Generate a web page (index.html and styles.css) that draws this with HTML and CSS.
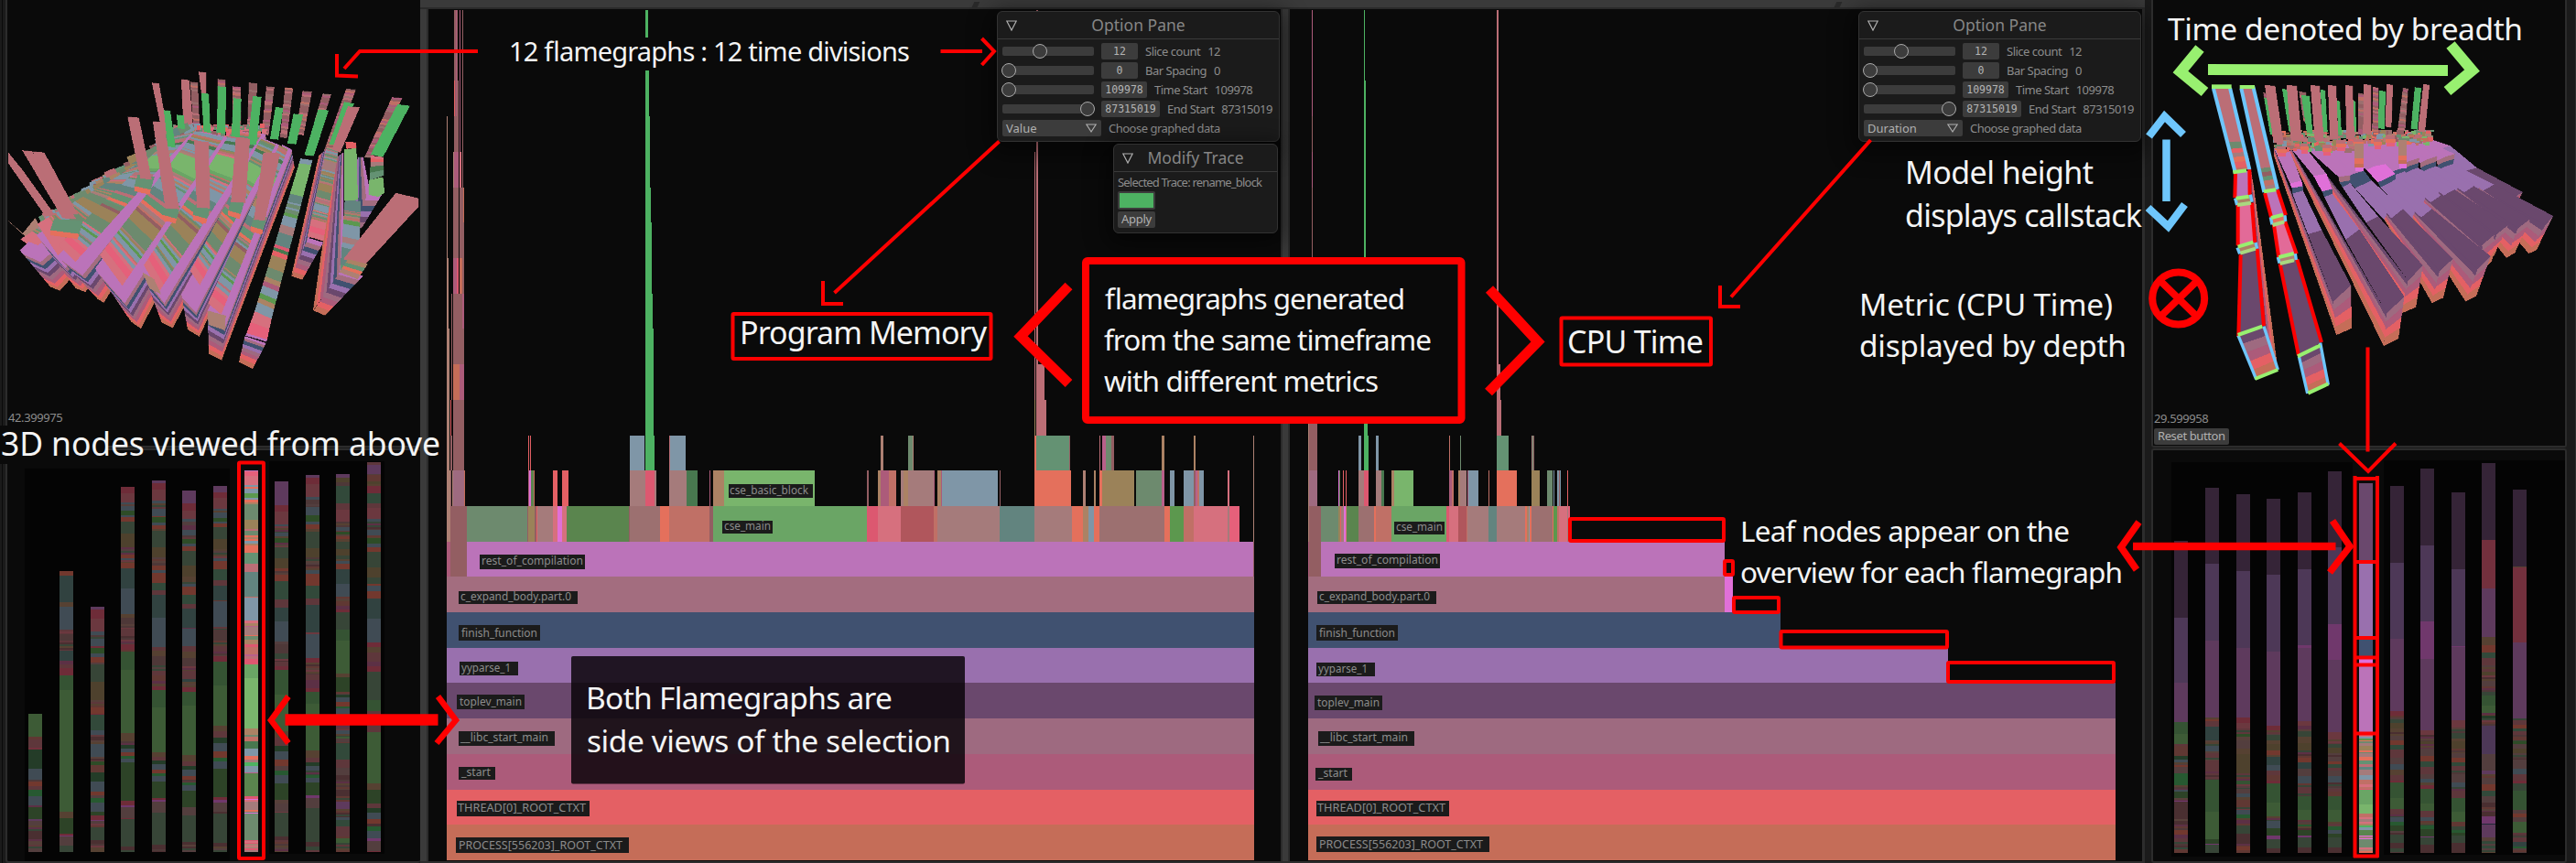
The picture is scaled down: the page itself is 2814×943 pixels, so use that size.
FILE: index.html
```html
<!DOCTYPE html>
<html lang="en">
<head>
<meta charset="utf-8">
<title>Flamegraph slices</title>
<link rel="stylesheet" href="styles.css">
</head>
<body>
<div class="screen">
  <aside class="side side-left">
    <section class="view view-top">
      <svg class="canvas" viewBox="8 0 451 487"><g id="model-left"></g></svg>
      <div class="readout"><span>42.399975</span></div>
    </section>
    <section class="view view-bottom">
      <svg class="canvas" viewBox="8 492 451 449">
        <rect class="shade" x="27" y="512" width="224" height="429"/>
        <rect class="shade" x="294" y="504" width="126" height="429"/>
        <g id="bars-left"></g>
      </svg>
    </section>
  </aside>

  <main class="center">
    <div class="topbar"><i class="slit slit-a"></i><i class="slit slit-b"></i></div>
    <div class="graphs">
      <div class="divider divider-first"></div>
      <section class="graph">
        <svg class="canvas" viewBox="468 10 931 931"><g id="flame-left"></g><g id="tags-left"></g></svg>
        <div class="window options">
          <header><svg class="tri" viewBox="0 0 12 12"><path d="M.8 1h10.4L6 11z"/></svg><h2>Option Pane</h2></header>
          <div class="rows">
            <div class="row"><span class="slider"><b class="knob k41"></b></span><span class="num">12</span><span class="lab">Slice count</span><span class="lab">12</span></div>
            <div class="row"><span class="slider"><b class="knob k0"></b></span><span class="num">0</span><span class="lab">Bar Spacing</span><span class="lab">0</span></div>
            <div class="row"><span class="slider"><b class="knob k0"></b></span><span class="num w50">109978</span><span class="lab">Time Start</span><span class="lab">109978</span></div>
            <div class="row"><span class="slider"><b class="knob k100"></b></span><span class="num w64">87315019</span><span class="lab">End Start</span><span class="lab">87315019</span></div>
            <div class="row"><span class="select">Value<svg class="tri" viewBox="0 0 12 12"><path d="M.8 2h10.4L6 10z"/></svg></span><span class="lab">Choose graphed data</span></div>
          </div>
        </div>
        <div class="window trace">
          <header><svg class="tri" viewBox="0 0 12 12"><path d="M.8 1h10.4L6 11z"/></svg><h2>Modify Trace</h2></header>
          <div class="trace-body">
            <span class="lab">Selected Trace: rename_block</span>
            <span class="swatch"></span>
            <span class="button">Apply</span>
          </div>
        </div>
      </section>
      <div class="divider"></div>
      <section class="graph">
        <svg class="canvas" viewBox="1409 10 931 931"><g id="flame-right"></g><g id="tags-right"></g></svg>
        <div class="window options">
          <header><svg class="tri" viewBox="0 0 12 12"><path d="M.8 1h10.4L6 11z"/></svg><h2>Option Pane</h2></header>
          <div class="rows">
            <div class="row"><span class="slider"><b class="knob k41"></b></span><span class="num">12</span><span class="lab">Slice count</span><span class="lab">12</span></div>
            <div class="row"><span class="slider"><b class="knob k0"></b></span><span class="num">0</span><span class="lab">Bar Spacing</span><span class="lab">0</span></div>
            <div class="row"><span class="slider"><b class="knob k0"></b></span><span class="num w50">109978</span><span class="lab">Time Start</span><span class="lab">109978</span></div>
            <div class="row"><span class="slider"><b class="knob k100"></b></span><span class="num w64">87315019</span><span class="lab">End Start</span><span class="lab">87315019</span></div>
            <div class="row"><span class="select">Duration<svg class="tri" viewBox="0 0 12 12"><path d="M.8 2h10.4L6 10z"/></svg></span><span class="lab">Choose graphed data</span></div>
          </div>
        </div>
      </section>
    </div>
  </main>

  <aside class="side side-right">
    <section class="view view-top">
      <svg class="canvas" viewBox="2352 0 450 487"><g id="model-right"></g></svg>
      <div class="readout"><span>29.599958</span><span class="button">Reset button</span></div>
    </section>
    <section class="view view-bottom">
      <svg class="canvas" viewBox="2352 492 450 449">
        <rect class="shade" x="2372" y="505" width="198" height="431"/>
        <rect class="shade" x="2604" y="503" width="198" height="431"/>
        <g id="bars-right"></g>
      </svg>
    </section>
  </aside>

  <svg class="notes" viewBox="0 0 2814 943">
    <g class="plate">
      <rect x="0" y="465" width="115" height="42"/>
      <rect x="540" y="41" width="470" height="36"/>
    </g>
    <g class="red w4">
      <path d="M522 56H393L376 75M368 59V82.500L391 83.500"/>
      <path d="M1027.500 56H1073M1072.500 42L1086 56L1072.500 71"/>
      <path d="M1091.500 154.500L911.500 320M899 307V332H921"/>
      <path d="M2043.500 153L1891 324.500M1879 312V335H1901"/>
      <path d="M2586.500 379.500V493.500M2555.500 484.500L2587 515L2617 484.500"/>
      <rect x="800.500" y="343" width="282" height="49" rx="1"/>
      <rect x="1705.500" y="347.500" width="163.500" height="51" rx="1"/>
      <rect x="261" y="505.500" width="27" height="432.500" rx="1"/>
      <rect x="1715" y="567" width="168" height="24" rx="1"/>
      <rect x="1884" y="613" width="9" height="15" rx="1"/>
      <rect x="1894" y="653" width="49" height="16" rx="1"/>
      <rect x="1945.500" y="690" width="181.500" height="17.500" rx="1"/>
      <rect x="2128" y="724" width="181" height="21" rx="1"/>
      <path d="M2572.500 520V937M2597 520V937M2571 523H2598M2571 614H2598M2571 697H2598M2571 718.500H2598M2571 726.500H2598M2571 801.500H2598M2571 935.500H2598"/>
    </g>
    <rect class="callout" x="1186" y="285" width="410.500" height="174" rx="2"/>
    <rect class="veil" x="624" y="717" width="430" height="139.500" rx="2"/>
    <g class="red">
      <path stroke-width="11" d="M1167.500 312.500L1115 367.500L1167.500 419"/>
      <path stroke-width="11" d="M1627 316L1680 373.500L1626 428.500"/>
      <path stroke-width="12.500" d="M311.500 786.500H478.500"/>
      <path stroke-width="6.500" d="M315 761L296 787L315 812M478.500 761L498 787L477 812"/>
      <path stroke-width="8.500" d="M2330 597H2551.500"/>
      <path stroke-width="7.500" d="M2336.500 570.500L2317 598L2334 622.500M2548 569L2567 597L2545 625.500"/>
      <circle cx="2379.700" cy="326" r="28.500" stroke-width="8"/>
      <path stroke-width="8" d="M2360 307L2400 346M2400 307L2360 346"/>
    </g>
    <path class="lime" d="M2412 76L2674 77M2403 53L2382 78.500L2408.500 100.500M2677 49L2700.500 77L2673.500 99.500"/>
    <path class="sky" d="M2366.500 152.500V220M2347.500 149L2364.500 127L2385 147M2346.500 227L2368.500 247.500L2386.500 223.500"/>
    <g class="say">
      <text x="1" y="497.500" font-size="35.500" textLength="480">3D nodes viewed from above</text>
      <text x="556" y="66.500" font-size="29" textLength="438">12 flamegraphs : 12 time divisions</text>
      <text x="808" y="376" font-size="34" textLength="270">Program Memory</text>
      <text x="1206" y="337.500" font-size="31.500" textLength="328">flamegraphs generated</text>
      <text x="1206" y="382.500" font-size="31.500" textLength="358">from the same timeframe</text>
      <text x="1206" y="427.500" font-size="31.500" textLength="300">with different metrics</text>
      <text x="1712" y="385.500" font-size="34" textLength="149">CPU Time</text>
      <text x="640" y="775" font-size="33.500" textLength="335">Both Flamegraphs are</text>
      <text x="641" y="822" font-size="33.500" textLength="398">side views of the selection</text>
      <text x="2081" y="201" font-size="34" textLength="206">Model height</text>
      <text x="2081" y="248" font-size="34" textLength="259">displays callstack</text>
      <text x="2031" y="345" font-size="33.500" textLength="277">Metric (CPU Time)</text>
      <text x="2031" y="390" font-size="33.500" textLength="292">displayed by depth</text>
      <text x="1901" y="591.500" font-size="31.500" textLength="360">Leaf nodes appear on the</text>
      <text x="1901" y="636.500" font-size="31.500" textLength="418">overview for each flamegraph</text>
      <text x="2368" y="44" font-size="33.500" textLength="388">Time denoted by breadth</text>
    </g>
  </svg>
</div>
<script src="script.js"></script>
</body>
</html>
```
FILE: styles.css
```css
* { box-sizing: border-box; }
body { margin: 0; background: #0a0a0a; overflow: hidden; }
.screen {
  position: relative;
  display: flex;
  width: 2814px;
  height: 943px;
  background: #1b1b1b;
  font: 13px "Noto Sans", "Open Sans", sans-serif;
  color: #8c8c8c;
}
.canvas { display: block; width: 100%; height: 100%; shape-rendering: crispEdges; }

.side { display: flex; flex-direction: column; gap: 1px; flex: none; }
.side-left { width: 459px; padding-left: 6px; background: linear-gradient(90deg, #1b1b1b 2px, #0a0a0a 2px, #0a0a0a 3px, #1b1b1b 3px); }
.side-right { width: 471px; padding: 0 9px 0 7px; border-right: 1px solid #2e2e2e; }
.view { position: relative; background: #0a0a0a; border: 2px solid #2c2c2c; border-radius: 3px; }
.view-top { height: 489px; border-top: 0; border-radius: 0 0 3px 3px; }
.view-bottom { flex: 1; min-height: 0; }
.side-left .view { border-right: 0; }
.readout {
  position: absolute;
  left: 1px;
  top: 449px;
  display: flex;
  flex-direction: column;
  align-items: flex-start;
  gap: 2px;
  line-height: 17px;
  letter-spacing: -.4px;
}
.side-left .readout { top: 448px; }
.button { padding: 0 4px; height: 18px; line-height: 17px; border-radius: 2px; background: #3c3c3c; color: #b0b0b0; }
.shade { fill: #040404; }

.center { display: flex; flex-direction: column; flex: none; width: 1884px; }
.topbar { position: relative; height: 10px; background: #3a3a3a; border-bottom: 2px solid #2a2a2a; }
.slit { position: absolute; top: 2px; width: 6px; height: 6px; background: #292929; transform: skewX(-25deg); }
.slit-a { left: 604px; }
.slit-b { left: 1546px; }
.graphs { display: flex; flex: 1; border: solid #2c2c2c; border-width: 0 3px 2px 0; }
.graph { position: relative; flex: none; width: 931px; height: 931px; background: #0a0a0a; }
.divider { flex: none; width: 10px; background: #3a3a3a; border: solid #2c2c2c; border-width: 0 2px; }
.divider-first { width: 9px; border-left-width: 0; }

.window {
  position: absolute;
  border: 1.500px solid #323232;
  border-radius: 6px;
  background: #1b1b1b;
  box-shadow: 0 6px 24px 8px rgba(0, 0, 0, .45);
}
.window header { position: relative; height: 30px; border-bottom: 1px solid #3a3a3a; text-align: center; }
.window h2 { margin: 0; font: 17.500px/28px "Noto Sans", sans-serif; color: #868686; }
.tri { width: 12px; height: 12px; fill: none; stroke: #b0b0b0; stroke-width: 1.200; }
header .tri { position: absolute; left: 9px; top: 9px; }
.options { left: 621px; top: 2px; width: 309px; height: 143px; }
.trace { left: 748px; top: 147px; width: 180px; height: 98px; }
.rows { display: flex; flex-direction: column; gap: 3px; padding: 4px 5px; }
.row { display: flex; align-items: center; gap: 8px; height: 18px; line-height: 18px; }
.slider { position: relative; flex: none; width: 100px; height: 10px; border-radius: 2px; background: #3c3c3c; }
.knob { position: absolute; top: -3px; width: 16px; height: 16px; border: 1px solid #aaa; border-radius: 50%; background: #3c3c3c; }
.k0 { left: -1px; }
.k41 { left: 33px; }
.k100 { left: 85px; }
.num { flex: none; width: 40px; height: 18px; border-radius: 2px; background: #3c3c3c; color: #b4b4b4; text-align: center; font: 11.500px/18px "DejaVu Sans Mono", monospace; }
.w50 { width: 50px; }
.w64 { width: 64px; }
.lab { letter-spacing: -.5px; white-space: nowrap; }
.select { display: flex; flex: none; align-items: center; justify-content: space-between; width: 108px; height: 18px; padding: 0 5px 0 4px; border-radius: 2px; background: #3c3c3c; color: #b0b0b0; }
.trace-body { display: flex; flex-direction: column; align-items: flex-start; gap: 2px; padding: 3px 4px; line-height: 16px; }
.trace-body .lab { letter-spacing: -.8px; }
.trace-body .button { letter-spacing: -.3px; }
.swatch { width: 41px; height: 20px; border: 2px solid #3c3c3c; border-radius: 2px; background: #4db262; }

.tag-box { fill: #1b1b1b; }
.tag { fill: #8c8c8c; font: 13px "Noto Sans", sans-serif; }

.notes { position: absolute; left: 0; top: 0; width: 2814px; height: 943px; fill: none; }
.plate { fill: #0a0a0a; }
.red { stroke: #f00; }
.w4 { stroke-width: 4; }
.callout { fill: #0a0a0a; stroke: #f00; stroke-width: 8; }
.veil { fill: #080408; fill-opacity: .84; }
.lime { stroke: #98f070; stroke-width: 12; }
.sky { stroke: #6ec6fc; stroke-width: 8.500; }
.say { fill: #f4f4f4; font-family: "Noto Sans", "Open Sans", sans-serif; }
```
FILE: script.js
```js
const NS = 'http://www.w3.org/2000/svg';
const C = {
  a: '#e5607a', b: '#d6707e', c: '#7f96a7', d: '#5c984e', e: '#e4705c', f: '#6d8a6e', g: '#9b8259',
  h: '#649273', i: '#62847f', j: '#9c7070', k: '#bb6e76', l: '#dc5870', m: '#6aa565', n: '#79b56c',
  o: '#ab8264', p: '#48784f', q: '#4db262', r: '#5a854e', s: '#a57b7b', t: '#bb73b9', u: '#e070d8',
  v: '#9970ae', w: '#6a486d', x: '#405170', y: '#c07066', z: '#b8608a',
  M: '#935e62', T: '#ad8073', E: '#a36d7f', L: '#9e6a80', S: '#ac5b7a', R: '#e46064', P: '#c56d58', G: '#b0565c'
};
const LAYERS = 'tExvwLSRP';
const NOISE = 'kysobfzjMoTf';
let seed = 7;
const rnd = () => (seed = (seed * 1103515245 + 12345) % 2147483648) / 2147483648;
const pick = s => s[Math.floor(rnd() * s.length)];
const half = hex => '#' + [1, 3, 5].map(i => Math.round(parseInt(hex.slice(i, i + 2), 16) * 0.5).toString(16).padStart(2, '0')).join('');

function add(parent, tag, attrs, text) {
  const el = document.createElementNS(NS, tag);
  for (const k in attrs) el.setAttribute(k, attrs[k]);
  if (text) el.textContent = text;
  parent.appendChild(el);
  return el;
}
/* groups use a grid of thirds of a pixel */
function group(id, ox, oy) {
  const g = document.getElementById(id);
  g.setAttribute('transform', `translate(${ox} ${oy}) scale(${1 / 3})`);
  return g;
}
const box = (g, x1, x2, y1, y2, fill) => add(g, 'rect', { x: x1, y: y1, width: x2 - x1, height: y2 - y1, fill });
const poly = (g, pts, fill) => add(g, 'polygon', { points: pts.join(' '), fill, stroke: fill, 'stroke-width': 0.6 });

/* ---- overview bars ---- */
function bars(id, oy, ox, xs, bottom, selected, list) {
  const g = group(id, ox, oy);
  list.forEach((row, n) => {
    const stops = row.match(/\d+[a-zA-Z*]/g).map(s => [parseInt(s), s.slice(-1)]);
    stops.forEach(([y, c], i) => {
      const end = i + 1 < stops.length ? stops[i + 1][0] : bottom;
      const shade = k => n === selected ? C[k] : half(C[k]);
      if (c !== '*') return box(g, xs[n], xs[n] + 45, y, end, shade(c));
      for (let p = y; p < end; p += 6) box(g, xs[n], xs[n] + 45, p, Math.min(p + 6, end), shade(pick(NOISE)));
    });
  });
}
bars('bars-left', 450, 0, [93, 195, 297, 396, 498, 597, 699, 801, 900, 1002, 1101, 1203], 1443, 7, [
  '990n 1066y 1075k 1101a 1107p 1170c 1206* 1212e 1228k 1240q 1259c 1290z 1296r 1336t 1341s 1355* 1378M 1400*',
  '522e 537i 625o 639c 714* 730j 750* 783i 816z 827k 840l 864m 912n 1311o 1332r 1384l 1390u 1393s 1422f',
  '639t 648l 678b 720c 732* 744c 769l 774d 792c 804e 822* 828f 885g 945* 968e 990l 994h 1044c 1060* 1089c 1132* 1147d 1158y 1182p 1213c 1245e 1257s 1265q 1281c 1311r 1324l 1338u 1341s 1350* 1362f 1404M 1415*',
  '246l 267b 297c 303* 309c 325d 339c 346e 360f 400g 445* 468e 480c 487* 495e 514i 580c 663o 675j 697* 712k 735* 762l 780* 786m 846n 1053o 1080* 1092p 1104c 1116e 1128q 1137c 1149r 1275l 1290u 1296s 1332l 1336f 1425M 1437*',
  '225t 234l 255b 291c 299* 318c 341e 345d 363c 372e 384o 390f 444g 477* 504e 518c 528e 561h 586k 600i 675c 771k 783o 801j 831* 850k 864y 882z 892o 900l 912m 969n 1116o 1130k 1143p 1155c 1173e 1186q 1194c 1212r 1266l 1272u 1278s 1315f 1420M 1435*',
  '258t 300l 324b 352c 360* 372z 388c 405* 417d 432c 442e 456f 504g 540* 564c 574e 600h 630k 645i 708z 711c 768k 786o 808j 834* 850k 876i 885* 903l 918m 963n 1125o 1145k 1161p 1173c 1194e 1206* 1215q 1224c 1242r 1296s 1322f 1410M 1420*',
  '243t 264l 282b 318c 324* 330c 347d 360c 366e 378f 418g 450* 480c 490e 516h 552k 570i 618y 622c 706* 714j 750* 768k 785* 800l 819m 897n 1029o 1048k 1068p 1086c 1113e 1134q 1146c 1170r 1263l 1272u 1280s 1312* 1323f 1413M 1425*',
  '192t 195a 209b 239c 246e 251c 267d 282c 288e 298o 303f 354g 384k 390f 406e 411o 416e 422c 432o 438e 462h 498k 525i 606y 609c 684b 694o 702z 706s 732e 735f 747o 762l 772y 795z 801k 810l 827m 873n 1038o 1059f 1065y 1080p 1104c 1127e 1139s 1149q 1161c 1183z 1186r 1260l 1270u 1273b 1278s 1306e 1310f 1314u 1317f 1404l 1408b 1412l 1416T 1422b 1426T 1432l 1437s',
  '228t 306l 328b 370c 376* 395c 408* 413d 430* 444f 481g 513e 523* 533e 556h 615k 642i 687c 753s 762j 793f 804* 820k 834l 846m 927n 1048o 1068k 1095p 1113c 1140e 1161s 1176q 1191c 1218r 1272* 1285s 1305* 1313f 1392M 1405*',
  '207t 216l 238b 280c 289j 304* 312c 338d 360c 370e 384o 393f 446g 478* 518c 531e 570h 612k 633i 723* 729c 808l 822* 860k 880z 905l 918m 957n 1110o 1134k 1150p 1161c 1176* 1190q 1200c 1216r 1257u 1265s 1300f 1410M 1425*',
  '204t 216g 230* 243h 300k 320b 360* 378c 390* 393d 402* 408e 418o 425f 450g 470* 490c 498e 516i 564c 606* 620y 636z 648l 657f 714m 750n 858o 870r 918* 927p 936c 950e 966q 972c 989n 1010* 1043c 1055* 1065n 1070* 1086h 1140k 1168s 1190M 1205* 1240M 1260* 1278t 1302* 1330c 1337h 1360* 1370k 1385* 1397n 1413*',
  '165k 174t 205* 208y 228g 237* 243l 266h 300k 315b 351c 360* 387c 405* 414d 432c 443e 459f 510g 543f 564e 570c 588e 612i 678c 756l 770o 790k 820z 835l 851f 945m 980k 1010* 1030k 1050n 1218o 1240r 1285k 1300p 1314c 1336e 1350* 1360q 1374c 1398u 1407s 1440l'
]);
bars('bars-right', 460, 2334, [123, 225, 327, 426, 528, 627, 729, 831, 930, 1032, 1131, 1233], 1415, 6, [
  '393w 645v 858t 987m 1026n 1060* 1068y 1098p 1110c 1120* 1128e 1133s 1156q 1194* 1208c 1216r 1235* 1246u 1248M 1305* 1311M 1323* 1340e 1355* 1368k 1380* 1398h 1404y',
  '219w 468v 720t 972o 978e 985k 1003i 1047* 1066c 1083* 1090k 1104* 1113k 1150* 1176m 1281n 1371r 1386u 1390f',
  '240w 492v 744t 972l 990b 1008* 1026d 1035* 1047s 1075o 1092g 1155* 1180m 1190* 1206s 1222c 1232* 1243y 1266* 1275c 1290q 1302* 1327f 1354M 1385* 1395e 1407y',
  '255w 504v 756t 998l 1015* 1030f 1046o 1060g 1080e 1095* 1100i 1128c 1145k 1160y 1180l 1188m 1251n 1296* 1312c 1335r 1360u 1370f 1402M',
  '234w 486v 735u 744t 984b 1000* 1020f 1036o 1056g 1080* 1104e 1120i 1140s 1164c 1188* 1200k 1220* 1230m 1275n 1308* 1322q 1330* 1342r 1360u 1364f 1398M',
  '165w 414v 666u 783t 1020b 1043* 1060f 1070g 1090* 1100s 1116e 1125h 1138k 1146s 1164c 1186* 1206k 1215y 1230m 1275n 1314* 1330q 1340c 1353r 1365f 1398M',
  '204w 468v 711x 780u 795t 1030b 1036c 1042d 1048e 1050f 1057s 1066g 1080e 1086* 1090s 1101e 1113h 1126k 1134i 1143s 1162c 1176y 1190b 1200* 1206l 1210m 1257n 1287y 1300* 1306s 1314* 1326q 1332c 1340s 1342r 1360u 1363s 1367u 1372f 1398b 1404* 1410e',
  '213w 465v 714t 952l 965* 978f 990g 1008o 1020* 1032s 1048e 1062h 1077k 1104s 1125c 1143o 1160k 1180l 1186m 1236n 1272k 1290* 1300c 1314q 1325r 1345* 1356f 1384M 1400*',
  '156w 408v 657u 780t 1014b 1030* 1050g 1060* 1075s 1098e 1117h 1134k 1158s 1173c 1185o 1195l 1206m 1254n 1278k 1300c 1312* 1326q 1338r 1362u 1365f 1389M',
  '234w 486v 738u 741t 982b 1005* 1023f 1040o 1050g 1075* 1088s 1105e 1118h 1132k 1145* 1160s 1185c 1200* 1212k 1236m 1281n 1314y 1330f 1342q 1350r 1358f 1383M',
  '138w 390a 549t 708o 735e 759h 778k 800* 822g 835* 852s 870* 888f 900m 933n 957* 965p 975* 998v 1092s 1146t 1158* 1170s 1192e 1212h 1230s 1250M 1265* 1280M 1296u 1320x 1323t 1365* 1380h 1385* 1395h 1402*',
  '225w 477o 480a 726t 975f 980k 995e 1008h 1017k 1030* 1050d 1060s 1075g 1090* 1110s 1140c 1158k 1180l 1188f 1212m 1275s 1287e 1298s 1314n 1350* 1365k 1380i 1395q 1402*'
]);

/* ---- flamegraphs ---- */
const Y = [33, 150, 264, 381, 498, 615, 729, 846, 963, 1077, 1194, 1311, 1428, 1542, 1659, 1776, 1890, 2007, 2124, 2238, 2355, 2472, 2589, 2703, 2820];
function flame(id, ox, towers, rows, base) {
  const g = group(id, ox, 0);
  towers.forEach(([x1, x2, y1, y2, c]) => box(g, x1, x2, y1, y2, C[c]));
  base.forEach(([r, x1, x2, c]) => box(g, x1, x2, Y[r], Y[r + 1], C[c]));
  for (const r in rows) {
    rows[r].trim().split(/\s+/).forEach(s => {
      const m = s.match(/(\d+)-(\d+)(\w)/);
      box(g, +m[1], +m[2], Y[r], Y[+r + 1], C[m[3]]);
    });
  }
}
flame('flame-left', 460, [
  [84, 87, 381, 846, 'T'], [84, 90, 846, 1077, 'T'], [84, 93, 1077, 1542, 'T'], [99, 102, 963, 1311, 'M'], [96, 99, 1311, 1428, 'R'], [96, 102, 1428, 1542, 'M'],
  [108, 120, 33, 264, 'M'], [114, 117, 33, 381, 'S'], [126, 129, 33, 615, 'S'], [135, 138, 33, 615, 'M'], [108, 123, 264, 498, 'M'], [108, 110, 264, 381, 'R'], [114, 117, 264, 381, 'S'],
  [105, 123, 498, 615, 'S'], [105, 108, 498, 615, 'T'], [126, 132, 498, 615, 'b'], [105, 123, 615, 846, 'M'], [126, 141, 615, 846, 'M'], [138, 141, 615, 729, 'P'],
  [105, 123, 846, 963, 'S'], [117, 123, 846, 963, 'l'], [126, 135, 846, 963, 'P'], [135, 141, 846, 963, 'M'], [105, 141, 963, 1194, 'M'], [135, 141, 963, 1077, 'S'],
  [105, 126, 1194, 1311, 'P'], [126, 141, 1194, 1311, 'S'], [105, 141, 1311, 1542, 'M'],
  [735, 744, 33, 123, 'q'], [735, 747, 231, 381, 'q'], [735, 750, 381, 615, 'q'], [735, 753, 615, 729, 'q'], [735, 756, 729, 963, 'q'], [735, 759, 963, 1077, 'q'], [735, 762, 1077, 1428, 'q'],
  [2010, 2013, 498, 1311, 'k'], [2010, 2013, 1311, 1428, 'g'], [2016, 2022, 33, 1194, 'k'], [2016, 2043, 1194, 1311, 'k'], [2016, 2049, 1311, 1428, 'k']
], {
  12: '351-354R 357-360R 684-732c 735-765q 813-816k 816-867c 1506-1515T 1596-1611f 1611-1614T 2010-2016e 2016-2124h 2124-2127M 2223-2226k 2232-2244z 2244-2262f 2262-2271M 2427-2436o 2532-2538o 2727-2730T',
  13: '84-96T 96-99M 102-105T 105-141L 141-144P 351-354S 354-360u 360-369r 369-372P 432-447R 462-483R 684-735s 735-765l 765-771s 813-870s 870-906p 945-948S 957-993o 993-1290n 1461-1467M 1497-1506o 1506-1533S 1533-1557y 1572-1581s 1581-1596o 1596-1680s 1680-1683S 1692-1704o 1704-1707S 1707-1890c 1896-1899M 2010-2130e 2169-2178T 2205-2211o 2223-2232e 2232-2337g 2343-2427f 2427-2436z 2454-2469c 2499-2532c 2532-2538M 2538-2544z 2544-2550y 2550-2565c 2643-2649b 2727-2730T',
  14: '84-96T 96-150M 150-348f 348-351M 351-372g 372-378M 378-381R 381-432s 432-447b 447-462u 462-477b 477-682r 682-684M 684-783j 783-813e 813-945y 945-957M 957-1461m 1461-1497l 1497-1572b 1572-1680G 1680-1692y 1692-1896s 1896-2010i 2010-2133s 2133-2169e 2169-2187o 2187-2205c 2205-2223e 2223-2343j 2343-2436j 2436-2454e 2454-2499d 2499-2532y 2532-2643b 2643-2649s 2649-2682a 2727-2730T'
}, [
  [15, 84, 96, 'S'], [15, 96, 150, 'M'], [15, 150, 2727, 't'], [15, 2727, 2730, 'M'], [16, 84, 2730, 'E'], [17, 84, 2730, 'x'], [18, 84, 2730, 'v'], [19, 84, 2730, 'w'],
  [20, 84, 2730, 'L'], [21, 84, 2730, 'S'], [22, 84, 2730, 'R'], [23, 84, 2730, 'P']
]);
flame('flame-right', 1400, [
  [99, 102, 33, 381, 'S'], [99, 102, 381, 498, 'M'], [99, 102, 498, 615, 'S'], [99, 102, 615, 900, 'M'], [87, 90, 1200, 1542, 'T'], [90, 117, 1200, 1542, 'M'],
  [270, 273, 33, 264, 'q'], [270, 276, 264, 1200, 'q'], [270, 282, 1200, 1428, 'q'], [705, 711, 33, 1194, 'k'], [705, 717, 1194, 1311, 'k'], [705, 720, 1311, 1428, 'k']
], {
  12: '252-261c 270-285q 309-318c 549-552y 585-588f 705-744h 819-822s 822-825f 825-828M',
  13: '87-90T 90-117L 186-189u 189-192r 201-204R 210-213R 252-270s 270-285l 309-327s 327-336p 360-369o 369-432n 549-558S 558-564y 579-585o 585-606s 609-612S 612-645c 678-681y 705-771e 819-846g 870-888f 891-894c 903-909c 909-912M 912-915c 936-939R',
  14: '87-90T 90-129M 129-186f 186-192g 192-195R 195-204s 204-210u 210-213b 213-252r 252-303j 303-309e 309-360y 360-540m 540-549l 549-579b 579-606G 606-609y 609-678s 678-705i 705-798s 798-804e 804-810o 810-813c 813-819e 819-888j 888-891e 891-903d 903-909y 909-936b 936-939s 939-945a'
}, [
  [15, 87, 90, 'S'], [15, 90, 129, 'M'], [15, 129, 1452, 't'], [16, 87, 1452, 'E'], [16, 1452, 1479, 'u'], [17, 87, 1635, 'x'], [18, 87, 2184, 'v'], [19, 87, 2733, 'w'],
  [20, 87, 2733, 'L'], [21, 87, 2733, 'S'], [22, 87, 2733, 'R'], [23, 87, 2733, 'P']
]);

/* name, box x, y, w, h, text x, baseline, text width (pixels) */
function tags(id, list) {
  const g = document.getElementById(id);
  list.forEach(([name, x, y, w, h, tx, ty, tw]) => {
    add(g, 'rect', { class: 'tag-box', x, y, width: w, height: h });
    add(g, 'text', { class: 'tag', x: tx, y: ty, textLength: tw, lengthAdjust: 'spacingAndGlyphs' }, name);
  });
}
tags('tags-left', [
  ['cse_basic_block', 796, 529, 92, 15, 797, 540, 86], ['cse_main', 789, 569, 55, 14, 791, 579, 51],
  ['rest_of_compilation', 524, 606, 115, 16, 526, 617, 111], ['c_expand_body.part.0', 501, 646, 130, 14, 503, 656, 121],
  ['finish_function', 501, 683, 89, 17, 504, 696, 83], ['yyparse_1', 502, 723, 64, 15, 504, 734, 54],
  ['toplev_main', 499, 759, 74, 16, 502, 771, 68], ['__libc_start_main', 501, 799, 105, 16, 503, 810, 96],
  ['_start', 501, 838, 40, 14, 504, 848, 32], ['THREAD[0]_ROOT_CTXT', 499, 875, 145, 17, 500, 887, 140],
  ['PROCESS[556203]_ROOT_CTXT', 498, 915, 189, 17, 501, 928, 179]
]);
tags('tags-right', [
  ['cse_main', 1523, 570, 55, 14, 1525, 580, 51], ['rest_of_compilation', 1458, 605, 115, 16, 1460, 616, 111],
  ['c_expand_body.part.0', 1439, 646, 130, 14, 1441, 656, 121], ['finish_function', 1438, 683, 89, 17, 1441, 696, 83],
  ['yyparse_1', 1438, 724, 64, 15, 1440, 735, 54], ['toplev_main', 1436, 760, 74, 16, 1439, 772, 68],
  ['__libc_start_main', 1440, 799, 105, 16, 1442, 810, 96], ['_start', 1437, 839, 40, 14, 1440, 849, 32],
  ['THREAD[0]_ROOT_CTXT', 1438, 875, 145, 17, 1439, 887, 140], ['PROCESS[556203]_ROOT_CTXT', 1438, 914, 189, 17, 1441, 927, 179]
]);

/* ---- 3D models ---- */
const mix = (p, q, t) => [p[0] + (q[0] - p[0]) * t, p[1] + (q[1] - p[1]) * t];
/* band of a quad whose ends are a-b (t = 0) and c-d (t = 1) */
const band = (g, a, b, c, d, t0, t1, fill) => poly(g, [mix(a, c, t0), mix(b, d, t0), mix(b, d, t1), mix(a, c, t1)], fill);
function layers(g, a, b, c, d, codes) {
  [...codes].forEach((k, i) => band(g, a, b, c, d, i / codes.length, (i + 1) / codes.length, C[k]));
}
function strip(g, a, b, c, d, stops) {
  stops.forEach(([t, k], i) => {
    const end = i + 1 < stops.length ? stops[i + 1][0] : 1;
    if (k !== '*') return band(g, a, b, c, d, t, end, C[k]);
    for (let p = t; p < end; p += 0.012) {
      band(g, a, b, c, d, p, Math.min(p + 0.012, end), C[pick('kysocfbThfgc')]);
    }
  });
}
const tower = (g, [x1, x2, y1, x3, x4, y2], c) => {
  if (c !== '*') return poly(g, [[x1, y1], [x2, y1 + 3], [x4, y2 + 3], [x3, y2]], C[c]);
  const n = Math.round((y2 - y1) / 6);
  for (let i = 0; i < n; i++) band(g, [x1, y1], [x2, y1 + 3], [x3, y2], [x4, y2 + 3], i / n, (i + 1) / n, C[pick('MMkSjMyM')]);
};
const TOP = [[0, 'b'], [0.05, 'a'], [0.09, 'b'], [0.11, 'c'], [0.13, '*'], [0.15, 'c'], [0.18, 'd'], [0.195, 'c'], [0.21, '*'], [0.23, 'f'], [0.3, 'g'], [0.37, 'M'], [0.39, '*'],
  [0.43, 'e'], [0.45, 'h'], [0.49, 'k'], [0.51, 'i'], [0.56, 'c'], [0.62, '*'], [0.7, 'm'], [0.72, 'n'], [0.83, '*'], [0.87, 'c'], [0.91, 'p'], [0.93, '*']];
const TOP_FAR = [[0, 'b'], [0.1, '*'], [0.16, 'c'], [0.2, 'f'], [0.27, '*'], [0.33, 'g'], [0.4, 'f'], [0.46, '*'], [0.54, 'i'], [0.6, '*'], [0.66, 'c'], [0.72, '*'], [0.8, 'i'], [0.86, 'k'], [0.9, 'c'], [0.95, 'f']];

(function left() {
  const g = group('model-left', 0, 0);
  // rear striped and green towers
  [[624, 648, 268, 634, 655, 430], [714, 738, 259, 712, 738, 420], [762, 788, 283, 765, 790, 430], [816, 843, 271, 810, 835, 430], [873, 899, 283, 858, 880, 440],
    [934, 960, 287, 918, 940, 450], [992, 1022, 298, 968, 995, 440], [1058, 1085, 307, 1030, 1055, 400], [1135, 1166, 291, 1060, 1090, 500], [1285, 1318, 319, 1195, 1220, 515]]
    .forEach(t => tower(g, t, '*'));
  [[498, 521, 271, 545, 562, 500], [594, 620, 260, 602, 634, 430], [651, 675, 235, 660, 676, 305]].forEach(t => tower(g, t, 'k'));
  // far rows of small blocks
  for (let i = 0; i < 260; i++) {
    const x = 560 + rnd() * 300, y = 405 + rnd() * 55;
    box(g, x, x + 8 + rnd() * 14, y, y + 6 + rnd() * 10, C[pick('aekRcfMhbR')]);
  }
  for (let i = 0; i < 240; i++) {
    const t = rnd(), x = 110 + t * 470 + rnd() * 40, y = 745 - t * 300 - rnd() * 38;
    poly(g, [[x, y], [x + 34, y - 14], [x + 46, y + 6], [x + 12, y + 22]], C[pick('ikcfMhgofhci')]);
  }
  poly(g, [[27, 724], [75, 765], [115, 715], [190, 840], [110, 800]], C.T);
  // right-hand slices, seen from their left side
  layers(g, [1215, 640], [1190, 515], [1160, 720], [1172, 515], 'tExv');
  layers(g, [1205, 640], [1250, 640], [1150, 745], [1185, 748], 'tExvwL');
  poly(g, [[1210, 590], [1255, 580], [1260, 632], [1240, 645], [1208, 638]], C.n);
  strip(g, [1212, 590], [1258, 575], [1215, 510], [1256, 515], [[0, 'h'], [0.3, 'p'], [0.55, 's'], [0.75, 'R'], [0.88, 'b']]);
  poly(g, [[1303, 342], [1343, 347], [1255, 515], [1215, 506]], C.q);
  layers(g, [1125, 880], [1125, 500], [1026, 1018], [1098, 520], LAYERS);
  layers(g, [1118, 885], [1190, 905], [1028, 1018], [1065, 1034], LAYERS);
  strip(g, [1115, 885], [1175, 905], [1130, 655], [1182, 660], [[0, 'h'], [0.08, 'i'], [0.33, 'c'], [0.4, 's'], [0.48, 'c'], [0.66, 'd'], [0.72, '*'], [0.85, 'i']]);
  poly(g, [[1128, 490], [1168, 486], [1173, 655], [1128, 658]], C.n);
  poly(g, [[1132, 465], [1166, 467], [1168, 485], [1136, 488]], C.R);
  poly(g, [[1297, 633], [1371, 650], [1371, 678], [1197, 867], [1125, 850]], C.k);
  strip(g, [1112, 892], [1172, 915], [1140, 850], [1205, 866], [[0, 'T'], [0.3, 'e'], [0.5, 'h'], [0.75, 'o']]);
  layers(g, [1012, 790], [1070, 490], [955, 905], [1045, 510], LAYERS);
  layers(g, [1010, 780], [1060, 795], [956, 905], [990, 917], LAYERS);
  strip(g, [1008, 775], [1060, 790], [1072, 480], [1110, 490], [[0, 'b'], [0.06, 'a'], [0.12, 'b'], [0.2, '*'], [0.3, 'c'], [0.37, '*'], [0.45, 'f'], [0.52, 'g'], [0.6, '*'], [0.75, 's'], [0.85, '*']]);
  poly(g, [[1128, 334], [1160, 340], [1100, 476], [1078, 474]], C.q);
  poly(g, [[1140, 349], [1179, 352], [1115, 500], [1088, 490]], C.k);
  // left-hand slices, nearer ones last
  const slabs = [
    [[65, 820], [125, 848], [165, 940], [196, 953], [470, 530], [540, 500]],
    [[120, 770], [205, 870], [248, 945], [280, 957], [510, 510], [590, 450]],
    [[190, 840], [262, 892], [320, 980], [340, 992], [570, 450], [640, 435]],
    [[312, 880], [402, 985], [430, 1055], [462, 1077], [650, 430], [745, 450]],
    [[470, 895], [535, 985], [530, 1057], [566, 1075], [770, 430], [870, 440]],
    [[595, 965], [642, 1015], [615, 1080], [653, 1103], [865, 455], [915, 475]],
    [[680, 1020], [740, 1058], [685, 1160], [726, 1181], [925, 475], [955, 490]]
  ];
  slabs.forEach(([fl, fr, bl, br, kl, kr], n) => {
    layers(g, fr, kr, br, [kr[0] + 10, kr[1] + 60], LAYERS);
    layers(g, fl, fr, bl, br, LAYERS);
    poly(g, [fl, fr, kr, kl], C.t);
    const inset = [fr[0] - 12, fr[1] - 12], up = n > 2 ? 26 : 36;
    const m = n === 5 ? 0.1 : n === 3 ? 0.04 : 0;
    const a = mix(fl, kl, m), b = mix(inset, [kr[0] - 8, kr[1]], m);
    strip(g, [a[0] + 2, a[1] - up], [b[0] - 3, b[1] - up * 0.6], [kl[0] - 10, kl[1]], [kr[0] - 12, kr[1]], n < 2 ? TOP_FAR : TOP);
  });
  poly(g, [[467, 893], [505, 915], [528, 965], [490, 945]], C.T);
  poly(g, [[680, 1018], [740, 1035], [736, 1082], [684, 1065]], C.T);
  poly(g, [[65, 820], [95, 793], [150, 815], [125, 848]], C.t);
  [[537, 558, 361, 550, 575, 480], [579, 602, 376, 583, 606, 420], [660, 684, 305, 668, 690, 432], [714, 741, 283, 711, 738, 435], [766, 791, 322, 758, 785, 447], [829, 857, 315, 812, 840, 472]]
    .forEach(t => tower(g, t, 'q'));
  // the slice seen end-on
  strip(g, [783, 1187], [828, 1209], [803, 1102], [872, 1125], [[0, 'P'], [0.17, 'R'], [0.33, 'S'], [0.45, 'L'], [0.58, 'v'], [0.7, 'x'], [0.83, 'E'], [0.92, 't']]);
  strip(g, [805, 1100], [874, 1120], [835, 1020], [890, 1045], [[0, 't'], [0.1, 'a'], [0.55, 'b']]);
  strip(g, [835, 1020], [890, 1045], [985, 520], [1024, 525], [[0, 'c'], [0.06, 'o'], [0.09, 'd'], [0.12, 'c'], [0.17, 'S'], [0.2, 'o'], [0.23, 'f'], [0.29, 'g'], [0.37, 'R'], [0.4, 'p'], [0.42, 'l'], [0.44, 'i'], [0.52, 's'], [0.57, 'c'], [0.63, 'd'], [0.65, '*'], [0.72, 'i'], [0.77, 'n'], [0.97, 'c']]);
  [[903, 928, 351, 885, 912, 455], [962, 993, 373, 942, 970, 470], [1043, 1077, 359, 998, 1028, 508]].forEach(t => tower(g, t, 'q'));
  // bases and shafts of the tall towers
  [[440, 500, 610], [535, 585, 705], [632, 685, 705], [748, 795, 690], [822, 868, 742], [165, 265, 755]].forEach(([x1, x2, y]) => {
    poly(g, [[x1, y], [x1 + 12, y - 38], [x2 + 6, y - 30], [x2 - 6, y + 12]], C.h);
    poly(g, [[x1, y], [x2 - 6, y + 12], [x2 - 10, y + 28], [x1, y + 16]], C.e);
  });
  [[418, 455, 383, 460, 497, 585], [501, 535, 398, 542, 588, 683], [637, 684, 462, 645, 688, 680], [773, 819, 452, 757, 804, 662], [863, 918, 500, 832, 868, 720],
    [73, 105, 493, 205, 250, 715], [108, 145, 497, 205, 255, 700]].forEach(t => tower(g, t, 'k'));
  poly(g, [[27, 500], [72, 555], [180, 705], [150, 710], [27, 535]], C.k);
})();

(function right() {
  const g = group('model-right', 2334, 0);
  /* back-left, back-right, then [left, right, code] cross sections towards the front, then bottom edge */
  const slabs = [
    [[870, 450], [930, 445], [[[990, 490], [1028, 478], 't'], [[1080, 560], [1115, 550], 'v'], [[1230, 650], [1265, 630], 'w']], [1220, 660], [1250, 660]],
    [[860, 455], [920, 450], [[[1010, 515], [1043, 505], 't'], [[1012, 530], [1040, 522], 'E'], [[1014, 545], [1037, 538], 'x'], [[1137, 625], [1172, 605], 'v'], [[1340, 738], [1365, 708], 'w']], [1285, 831], [1310, 820]],
    [[810, 455], [880, 450], [[[955, 522], [985, 512], 't'], [[957, 538], [982, 530], 'E'], [[960, 552], [982, 545], 'x'], [[1075, 630], [1105, 610], 'v'], [[1250, 748], [1290, 718], 'w']], [1212, 845], [1240, 828]],
    [[760, 460], [830, 455], [[[895, 528], [927, 518], 't'], [[898, 543], [924, 535], 'E'], [[900, 558], [922, 550], 'x'], [[1008, 640], [1042, 622], 'v'], [[1180, 768], [1217, 738], 'w']], [1150, 860], [1170, 840]],
    [[720, 460], [790, 458], [[[845, 560], [878, 550], 't'], [[852, 572], [878, 562], 'x'], [[965, 663], [998, 640], 'v'], [[1132, 803], [1172, 770], 'w']], [1140, 880], [1165, 855]],
    [[660, 465], [730, 460], [[[780, 545], [815, 538], 't'], [[817, 586], [848, 570], 'u'], [[825, 602], [848, 588], 'x'], [[935, 711], [968, 685], 'v'], [[1118, 882], [1160, 840], 'w']], [1078, 988], [1113, 970]],
    [[610, 470], [680, 465], [[[712, 570], [745, 560], 't'], [[742, 605], [770, 592], 'x'], [[840, 712], [873, 685], 'v'], [[993, 888], [1037, 848], 'w']], [968, 993], [1005, 976]],
    [[550, 480], [620, 470], [[[662, 580], [700, 575], 't'], [[665, 598], [700, 592], 'E'], [[675, 614], [700, 600], 'x'], [[752, 729], [792, 710], 'v'], [[890, 920], [938, 870], 'w']], [868, 1027], [915, 1007]],
    [[505, 485], [550, 480], [[[580, 577], [622, 570], 't'], [[608, 628], [641, 620], 'u'], [[615, 646], [641, 636], 'x'], [[685, 786], [730, 752], 'v'], [[820, 1027], [877, 972], 'w']], [810, 1134], [858, 1110]],
    [[450, 485], [500, 490], [[[503, 602], [540, 592], 't'], [[509, 617], [545, 610], 'u'], [[511, 635], [545, 625], 'x'], [[562, 768], [607, 755], 'v'], [[645, 988], [702, 935], 'w']], [655, 1098], [705, 1076]]
  ];
  slabs.forEach(([bl, br, cuts, dl, dr], n) => {
    const end = cuts[cuts.length - 1];
    if (n < 7) {
      // neighbouring tops nearly touch, so only a shallow side remains below each stage
      let p = bl;
      cuts.forEach(([l, , c]) => { poly(g, [p, l, [l[0] - 26, l[1] + 12], [p[0] - 26, p[1] + 12]], C[c]); p = l; });
      layers(g, mix(bl, end[0], 0.55), end[0], [mix(bl, end[0], 0.55)[0] - 8, mix(bl, end[0], 0.55)[1] + 20], dl, 'wLSRP');
    } else {
      layers(g, bl, end[0], [bl[0], bl[1] + 25], dl, 'wLSRRPP');
    }
    layers(g, end[0], end[1], dl, dr, 'LSRP');
    let a = bl, b = br;
    cuts.forEach(([l, r, c]) => { poly(g, [a, b, r, l], C[c]); a = l; b = r; });
  });
  // small blocks in front of the far towers
  for (let i = 0; i < 420; i++) {
    const x = 440 + rnd() * 520, y = 425 + rnd() * (x < 720 ? 62 : 38);
    box(g, x, x + 8 + rnd() * 18, y, y + 5 + rnd() * 12, C[pick('yPeRkfchMTgnj')]);
  }
  [[727, 745, 305, 727, 742, 440], [775, 792, 285, 772, 792, 430], [873, 890, 288, 856, 880, 425], [532, 555, 300, 548, 565, 400], [415, 426, 303, 440, 450, 440]].forEach(t => tower(g, t, '*'));
  [[477, 495, 291, 500, 514, 432], [540, 567, 312, 558, 577, 435], [603, 618, 294, 610, 626, 430], [657, 666, 330, 660, 672, 440], [708, 717, 330, 708, 720, 430], [795, 816, 297, 792, 812, 420], [912, 933, 286, 899, 920, 422], [418, 428, 320, 438, 450, 440]]
    .forEach(t => tower(g, t, 'q'));
  [[420, 454, 279, 450, 482, 468], [492, 525, 279, 506, 542, 460], [570, 600, 279, 584, 614, 460], [627, 654, 279, 634, 661, 455], [684, 708, 279, 688, 714, 455], [745, 768, 276, 742, 768, 438], [820, 840, 276, 815, 835, 415], [940, 960, 276, 922, 945, 430]]
    .forEach(t => tower(g, t, 'k'));
  [[460, 490, 480], [536, 562, 470], [608, 636, 475], [655, 683, 460], [712, 740, 455], [778, 800, 455], [815, 845, 445]].forEach(([x1, x2, y]) => {
    box(g, x1, x2, y, y + 10, C.k); box(g, x1, x2 + 3, y + 10, y + 22, C.e); box(g, x1 + 3, x2, y + 22, y + 34, C.a);
  });
  [[714, 744, 470, 528], [858, 885, 460, 518]].forEach(([x1, x2, y1, y2]) => {
    box(g, x1, x2, y1, y2 - 8, C.T); box(g, x1, x2, y2 - 8, y2 + 8, C.e); box(g, x1, x2, y2 + 8, y2 + 20, C.P); box(g, x1 + 3, x2, y2 + 20, y2 + 34, C.u);
  });

  // the two outlined slices
  layers(g, [364, 500], [418, 1070], [385, 620], [462, 1205], 'wSRP');
  strip(g, [250, 285], [308, 285], [320, 560], [370, 555], [[0, 'k'], [0.66, 'f'], [0.74, 'R'], [0.79, 's'], [0.84, 'e'], [0.9, 'R'], [0.97, 'y']]);
  strip(g, [322, 565], [370, 560], [325, 645], [375, 640], [[0, 't']]);
  strip(g, [325, 645], [375, 640], [328, 670], [378, 662], [[0, 'o']]);
  poly(g, [[330, 672], [378, 665], [388, 795], [332, 810]], '#e26a98');
  poly(g, [[332, 810], [388, 795], [392, 818], [338, 832]], C.o);
  poly(g, [[338, 832], [392, 818], [418, 1070], [330, 1100]], C.w);
  layers(g, [332, 1100], [418, 1072], [392, 1242], [462, 1210], 'wLSRP');
  strip(g, [342, 288], [385, 285], [418, 628], [462, 620], [[0, 'k'], [0.78, 'f'], [0.82, 'M'], [0.86, 'h'], [0.9, 'y'], [0.95, 's']]);
  poly(g, [[420, 630], [462, 622], [488, 705], [440, 715]], C.t);
  poly(g, [[440, 715], [488, 705], [490, 730], [446, 740]], C.e);
  poly(g, [[446, 740], [490, 730], [524, 832], [464, 845]], '#e26a98');
  poly(g, [[464, 845], [524, 832], [524, 852], [470, 865]], C.T);
  poly(g, [[470, 865], [524, 852], [605, 1122], [530, 1165]], C.w);
  layers(g, [532, 1165], [602, 1130], [560, 1290], [630, 1260], 'wLSRP');

  const line = (pts, stroke, w = 12) => add(g, 'polyline', { points: pts, stroke, 'stroke-width': w, fill: 'none', 'shape-rendering': 'auto' });
  const red = '#f00', sky = '#6ec6fc', lime = '#98f070';
  line('252,290 323,565', sky); line('306,288 370,556', sky); line('343,290 418,630', sky); line('382,284 462,620', sky);
  line('324,568 322,648', red); line('370,556 371,640', red); line('332,670 332,805', red); line('378,665 388,795', red);
  line('341,835 334,1104', red); line('395,816 417,1068', red);
  line('420,633 442,715', red); line('462,622 489,705', red); line('450,738 466,845', red); line('487,727 524,832', red);
  line('470,865 531,1165', red); line('526,850 606,1122', red);
  line('333,1100 392,1243', sky, 10); line('417,1070 463,1212', sky, 10); line('532,1168 560,1290', sky, 10); line('602,1124 628,1262', sky, 10);
  line('323,650 329,672', sky, 10); line('373,638 378,662', sky, 10); line('330,812 338,832', sky, 10); line('390,795 395,815', sky, 10);
  line('439,712 444,736', sky, 10); line('486,706 488,726', sky, 10); line('463,843 468,863', sky, 10); line('520,832 523,852', sky, 10);
  line('246,284 311,284', lime, 14); line('338,285 387,285', lime, 12); line('316,565 360,559', lime); line('326,650 368,644', lime); line('330,672 375,665', '#a8d880');
  line('332,809 382,794', lime); line('340,830 390,815', '#a8d880'); line('332,1098 412,1070', lime); line('388,1242 463,1212', lime);
  line('417,628 457,622', lime); line('441,714 480,704', lime); line('446,738 484,727', '#a8d880'); line('466,843 515,831', lime); line('470,864 516,853', '#a8d880');
  line('528,1168 602,1132', lime); line('562,1289 628,1258', lime);
})();
```
